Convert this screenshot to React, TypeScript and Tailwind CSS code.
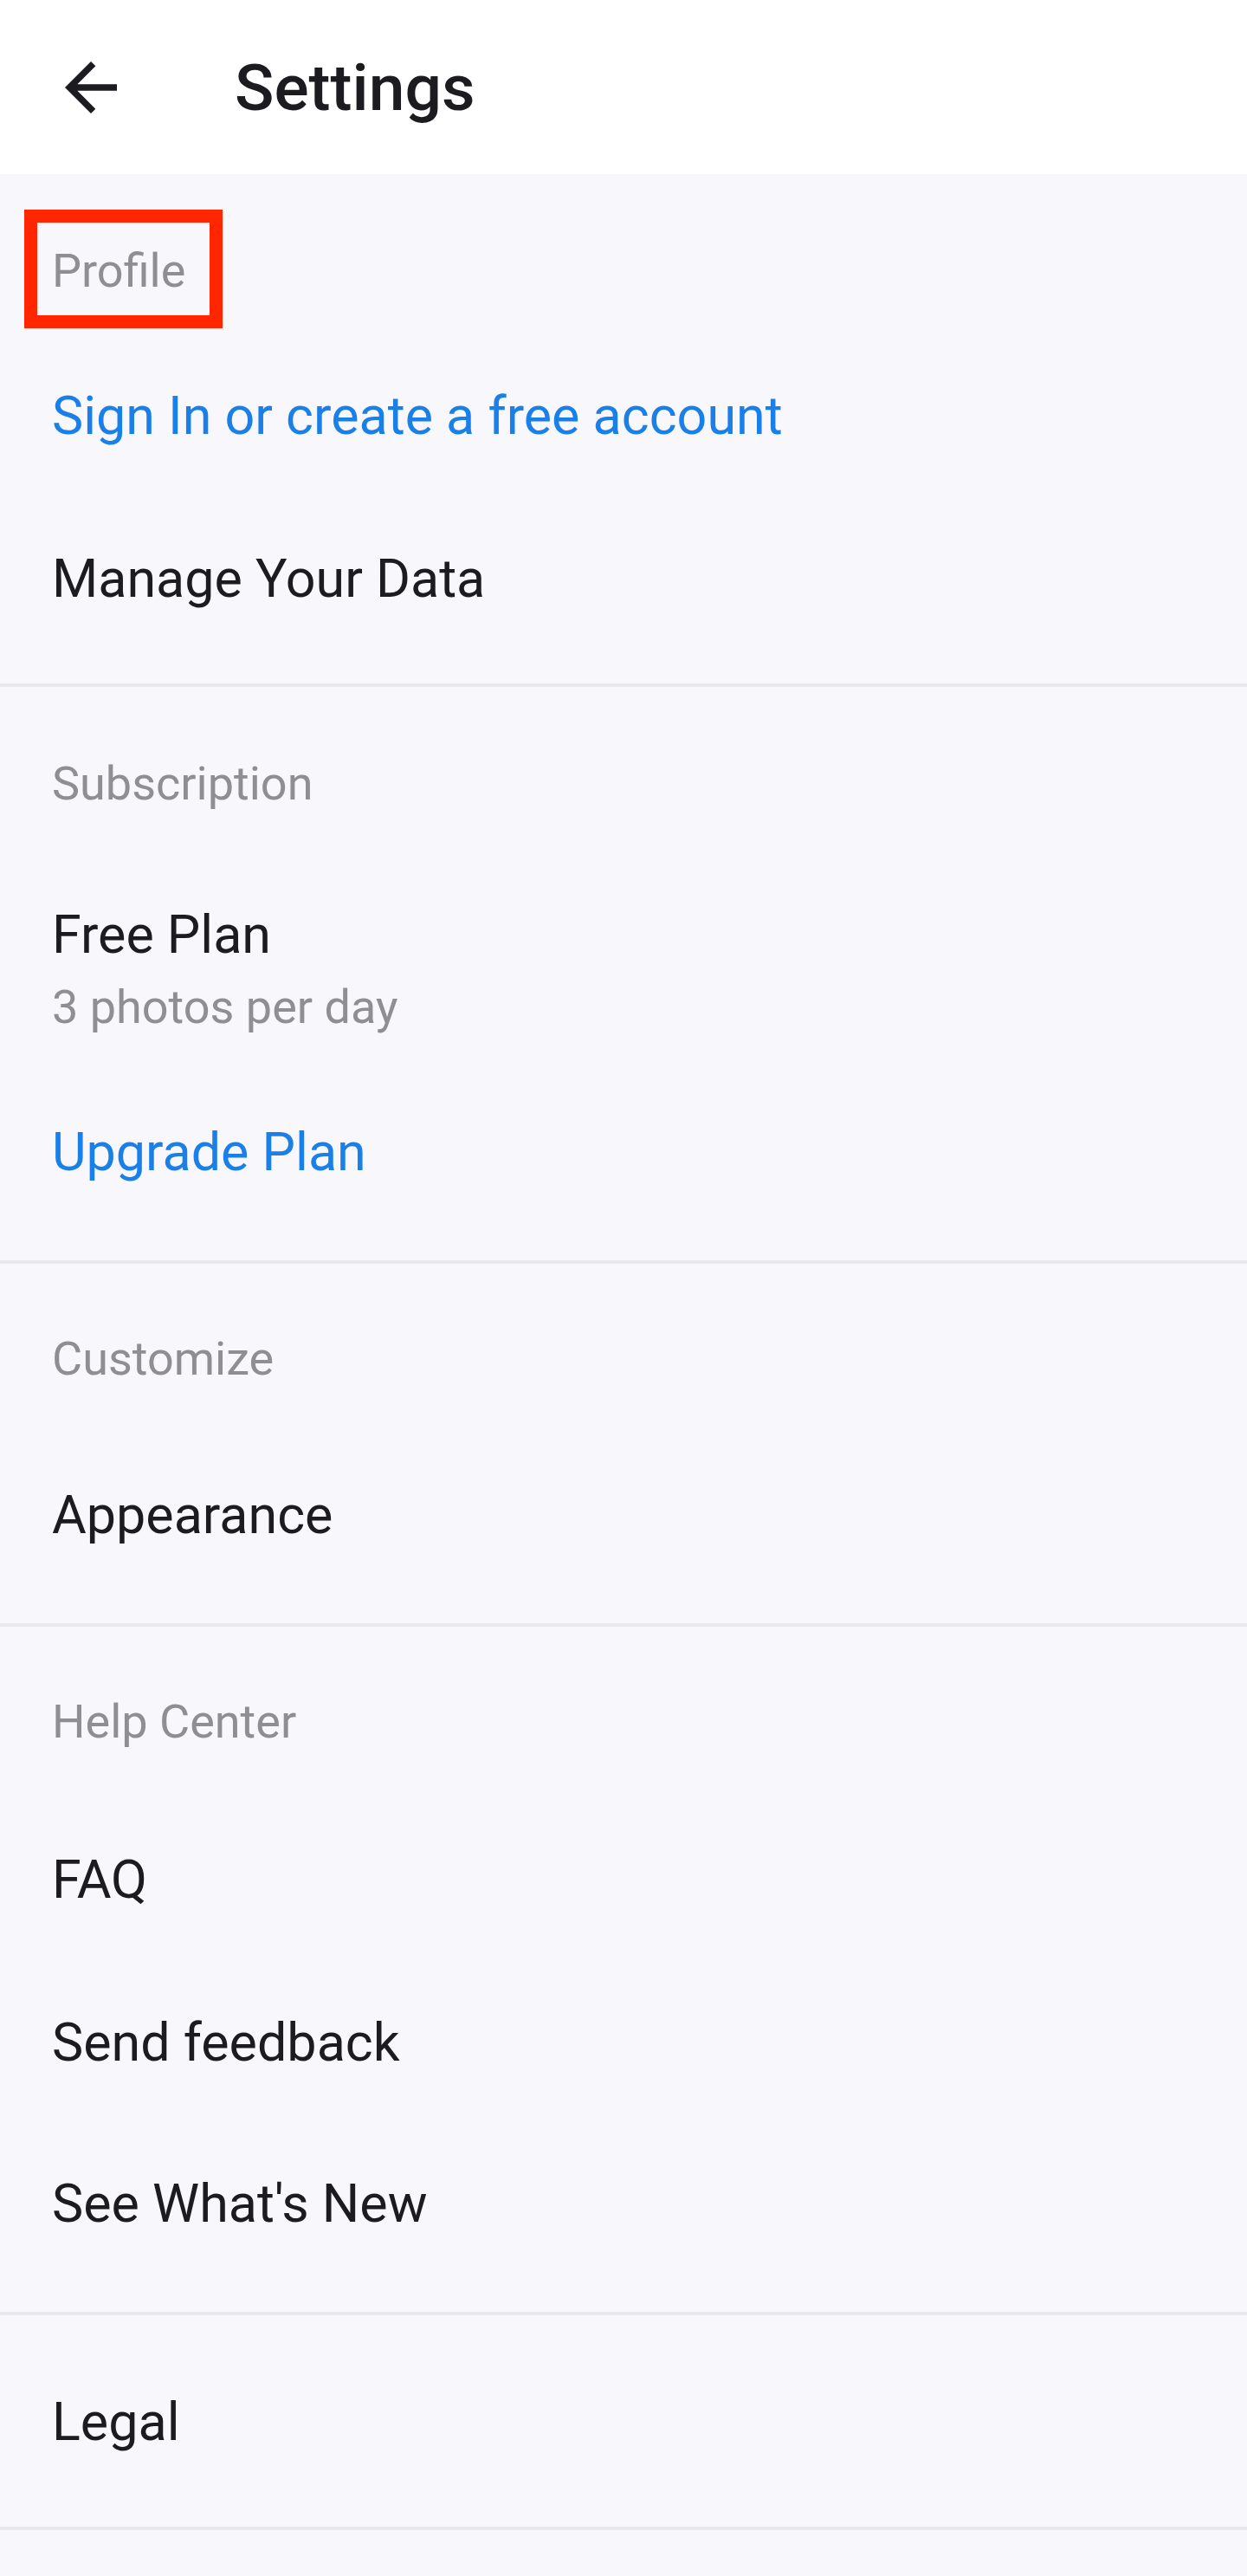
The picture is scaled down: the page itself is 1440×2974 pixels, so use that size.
import React from 'react';

const font = { fontFamily: 'Roboto, "Noto Sans", sans-serif' };

function SectionHeader({ label, className = '' }: { label: string; className?: string }) {
  return (
    <div className={`h-[64px] text-[54px] leading-[64px] text-[#8e8e93] ${className}`}>{label}</div>
  );
}

function Item({
  label,
  blue = false,
  className = '',
}: {
  label: string;
  blue?: boolean;
  className?: string;
}) {
  return (
    <div
      className={`h-[72px] text-[61px] leading-[72px] ${blue ? 'text-[#1a80e8]' : 'text-[#1c1b1f]'} ${className}`}
    >
      {label}
    </div>
  );
}

function Divider() {
  return <div className="h-[4px] w-full bg-[#e8e8ed]" />;
}

export default function App() {
  return (
    <div className="relative min-h-[2974px] w-full bg-[#f7f7fc]" style={font}>
      {/* Top bar */}
      <div className="flex h-[201px] items-center bg-white pl-[60px]">
        <svg width="90" height="90" viewBox="0 0 24 24" className="text-[#1c1b1f]" fill="currentColor">
          <path d="M20 11H7.83l5.59-5.59L12 4l-8 8 8 8 1.41-1.41L7.83 13H20v-2z" />
        </svg>
        <h1 className="ml-[121px] text-[75px] font-medium leading-[90px] text-[#1c1b1f]">Settings</h1>
      </div>

      {/* Profile */}
      <div className="px-[60px] pb-[85px] pt-[80px]">
        <SectionHeader label="Profile" />
        <Item label="Sign In or create a free account" blue className="mt-[99px]" />
        <Item label="Manage Your Data" className="mt-[116px]" />
      </div>
      <Divider />

      {/* Subscription */}
      <div className="px-[60px] pb-[89px] pt-[80px]">
        <SectionHeader label="Subscription" />
        <Item label="Free Plan" className="mt-[106px]" />
        <div className="mt-[16px] h-[64px] text-[54px] leading-[64px] text-[#8e8e93]">3 photos per day</div>
        <Item label="Upgrade Plan" blue className="mt-[99px]" />
      </div>
      <Divider />

      {/* Customize */}
      <div className="px-[60px] pb-[89px] pt-[78px]">
        <SectionHeader label="Customize" />
        <Item label="Appearance" className="mt-[112px]" />
      </div>
      <Divider />

      {/* Help Center */}
      <div className="px-[60px] pb-[89px] pt-[78px]">
        <SectionHeader label="Help Center" />
        <Item label="FAQ" className="mt-[114px]" />
        <Item label="Send feedback" className="mt-[116px]" />
        <Item label="See What's New" className="mt-[114px]" />
      </div>
      <Divider />

      {/* Legal */}
      <div className="px-[60px] pb-[85px] pt-[87px]">
        <Item label="Legal" />
      </div>
      <Divider />

      {/* highlight marker around Profile */}
      <div className="pointer-events-none absolute left-[28px] top-[242px] h-[137px] w-[229px] border-[15px] border-[#ff2600]" />
    </div>
  );
}
